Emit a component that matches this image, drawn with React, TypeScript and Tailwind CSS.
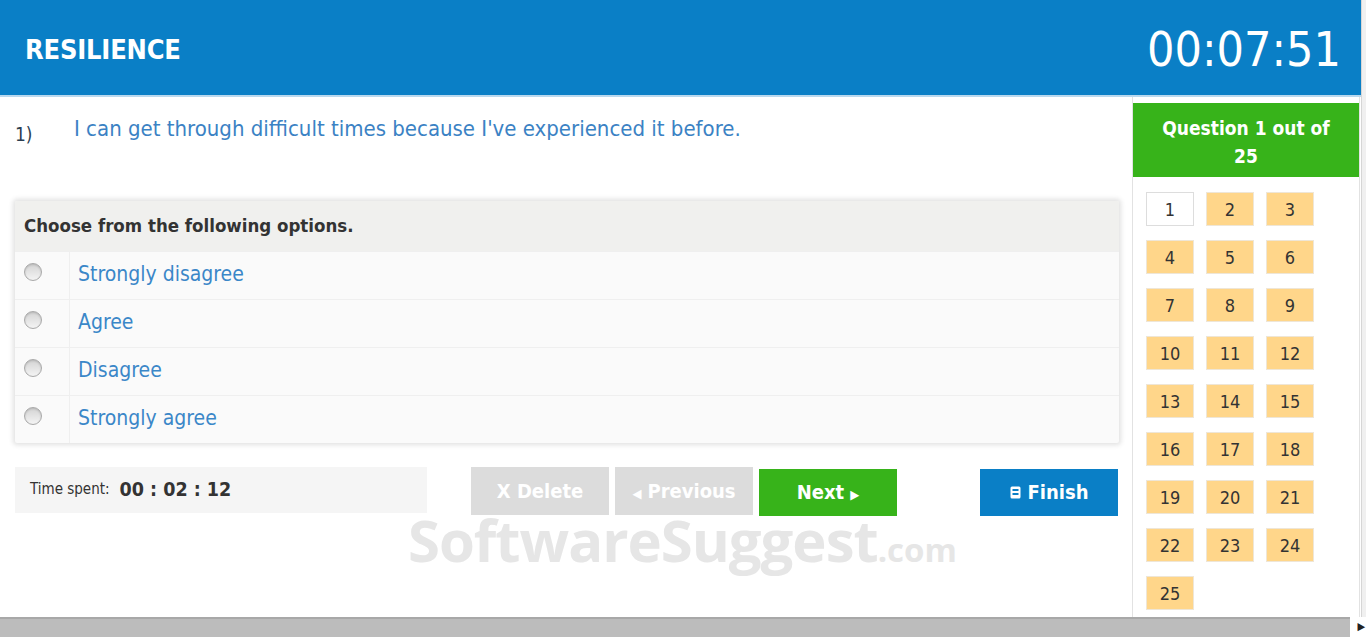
import React from 'react';

const options = ['Strongly disagree', 'Agree', 'Disagree', 'Strongly agree'];
const numbers = Array.from({ length: 25 }, (_, i) => i + 1);

function Radio() {
  return (
    <span className="block h-[18px] w-[18px] rounded-full border border-[#a9a9a9] bg-gradient-to-b from-[#d4d4d4] to-[#f4f4f4] shadow-[inset_0_1px_2px_rgba(0,0,0,0.15)]" />
  );
}

function FinishIcon() {
  return (
    <svg width="11" height="13" viewBox="0 0 11 13" className="mr-[7px]">
      <rect x="0.5" y="0.5" width="10" height="12" rx="1.5" fill="white" />
      <rect x="2.5" y="3" width="6" height="2" fill="#0a7fc6" />
      <rect x="2.5" y="7" width="6" height="2" fill="#0a7fc6" />
    </svg>
  );
}

export default function App() {
  return (
    <div className="relative flex h-[637px] w-[1366px] flex-col overflow-hidden bg-white font-['DejaVu_Sans_Condensed','DejaVu_Sans',sans-serif]">
      <div className="flex flex-1 min-h-0">
        <div className="flex w-[1361px] flex-col">
          {/* header */}
          <header className="flex h-[97px] shrink-0 items-center justify-between border-b-2 border-[#b9d8ee] bg-[#0a7fc6] pl-[25px] pr-[20px]">
            <h1 className="pt-[6px] text-[27px] font-bold tracking-[-0.2px] text-white">RESILIENCE</h1>
            <div className="pt-[2px] text-[48px] leading-none text-white">00:07:51</div>
          </header>

          <div className="flex flex-1 min-h-0">
            {/* main */}
            <main className="w-[1132px] shrink-0 pl-[15px]">
              <div className="flex items-start pt-[17px]">
                <span className="mt-[6px] w-[59px] text-[19px] text-[#2c3e50]">1)</span>
                <p className="text-[22px] leading-[30px] text-[#3b82c4]">
                  I can get through difficult times because I've experienced it before.
                </p>
              </div>

              <div className="mt-[52px] w-[1104px] overflow-hidden rounded-[2px] bg-[#fafafa] shadow-[0_0_5px_2px_rgba(0,0,0,0.12)]">
                <div className="flex h-[50px] items-center bg-[#f0f0ee] pl-[9px] text-[18.5px] font-bold text-[#333]">
                  Choose from the following options.
                </div>
                {options.map((o) => (
                  <div key={o} className="flex h-[48px] border-t border-[#efefef]">
                    <div className="flex w-[55px] items-center border-r border-[#efefef] pb-[6px] pl-[9px]">
                      <Radio />
                    </div>
                    <div className="flex items-center pl-[8px] text-[21px] text-[#3a87c8]">{o}</div>
                  </div>
                ))}
              </div>

              <div className="mt-[24px] flex items-start">
                <div className="flex h-[46px] w-[412px] items-center bg-[#f5f5f5] pl-[15px]">
                  <span className="text-[15px] text-[#333]">Time spent:</span>
                  <span className="ml-[10px] text-[19.5px] font-bold text-[#333]">00 : 02 : 12</span>
                </div>
                <div className="ml-[44px] flex gap-[6px]">
                  <button className="h-[48px] w-[138px] bg-[#dcdcdc] text-[20px] font-bold text-white">X Delete</button>
                  <button className="h-[48px] w-[138px] bg-[#dcdcdc] text-[20px] font-bold text-white">
                    <span className="mr-[6px] text-[13px]">◀</span>Previous
                  </button>
                  <button className="mt-[2px] h-[47px] w-[138px] bg-[#37b31a] text-[20px] font-bold text-white">
                    Next<span className="ml-[6px] text-[13px]">▶</span>
                  </button>
                </div>
                <button className="ml-[83px] mt-[2px] flex h-[47px] w-[138px] items-center justify-center bg-[#0a7fc6] text-[20px] font-bold text-white">
                  <FinishIcon />
                  Finish
                </button>
              </div>
            </main>

            {/* sidebar */}
            <aside className="flex w-[228px] flex-col border-x border-[#e2e2e2] pt-[6px]">
              <div className="flex h-[74px] flex-col items-center justify-center bg-[#37b31a] pt-[4px] text-center text-[19px] font-bold leading-[28px] text-white">
                <span>Question 1 out of</span>
                <span>25</span>
              </div>
              <div className="grid w-fit grid-cols-3 gap-x-[12px] gap-y-[14px] pl-[13px] pt-[15px]">
                {numbers.map((n) => (
                  <div
                    key={n}
                    className={
                      n === 1
                        ? 'flex h-[34px] w-[48px] items-center justify-center border border-[#dddddd] bg-white text-[18px] text-[#333]'
                        : 'flex h-[34px] w-[48px] items-center justify-center border border-[#efe6d6] bg-[#ffd68a] text-[18px] text-[#333]'
                    }
                  >
                    {n}
                  </div>
                ))}
              </div>
            </aside>
          </div>
        </div>
        <div className="w-[5px] border-l border-[#d6d6d6] bg-[#f0f0f0]" />
      </div>

      {/* bottom scrollbar */}
      <div className="flex h-[20px] shrink-0 items-stretch">
        <div className="w-[1350px] border-t-2 border-[#a8a8a8] bg-[#bcbcbc]" />
        <div className="flex flex-1 items-center justify-end bg-white pr-[1px] text-[11px] text-[#222]">▶</div>
      </div>

      {/* watermark */}
      <div className="pointer-events-none absolute left-[408px] top-[518px] flex items-baseline font-['Open_Sans',sans-serif] font-bold leading-[44px] text-[#e6e6e6]">
        <span className="text-[58px] tracking-[-1px]">SoftwareSuggest</span>
        <span className="text-[33px]">.com</span>
      </div>
    </div>
  );
}
